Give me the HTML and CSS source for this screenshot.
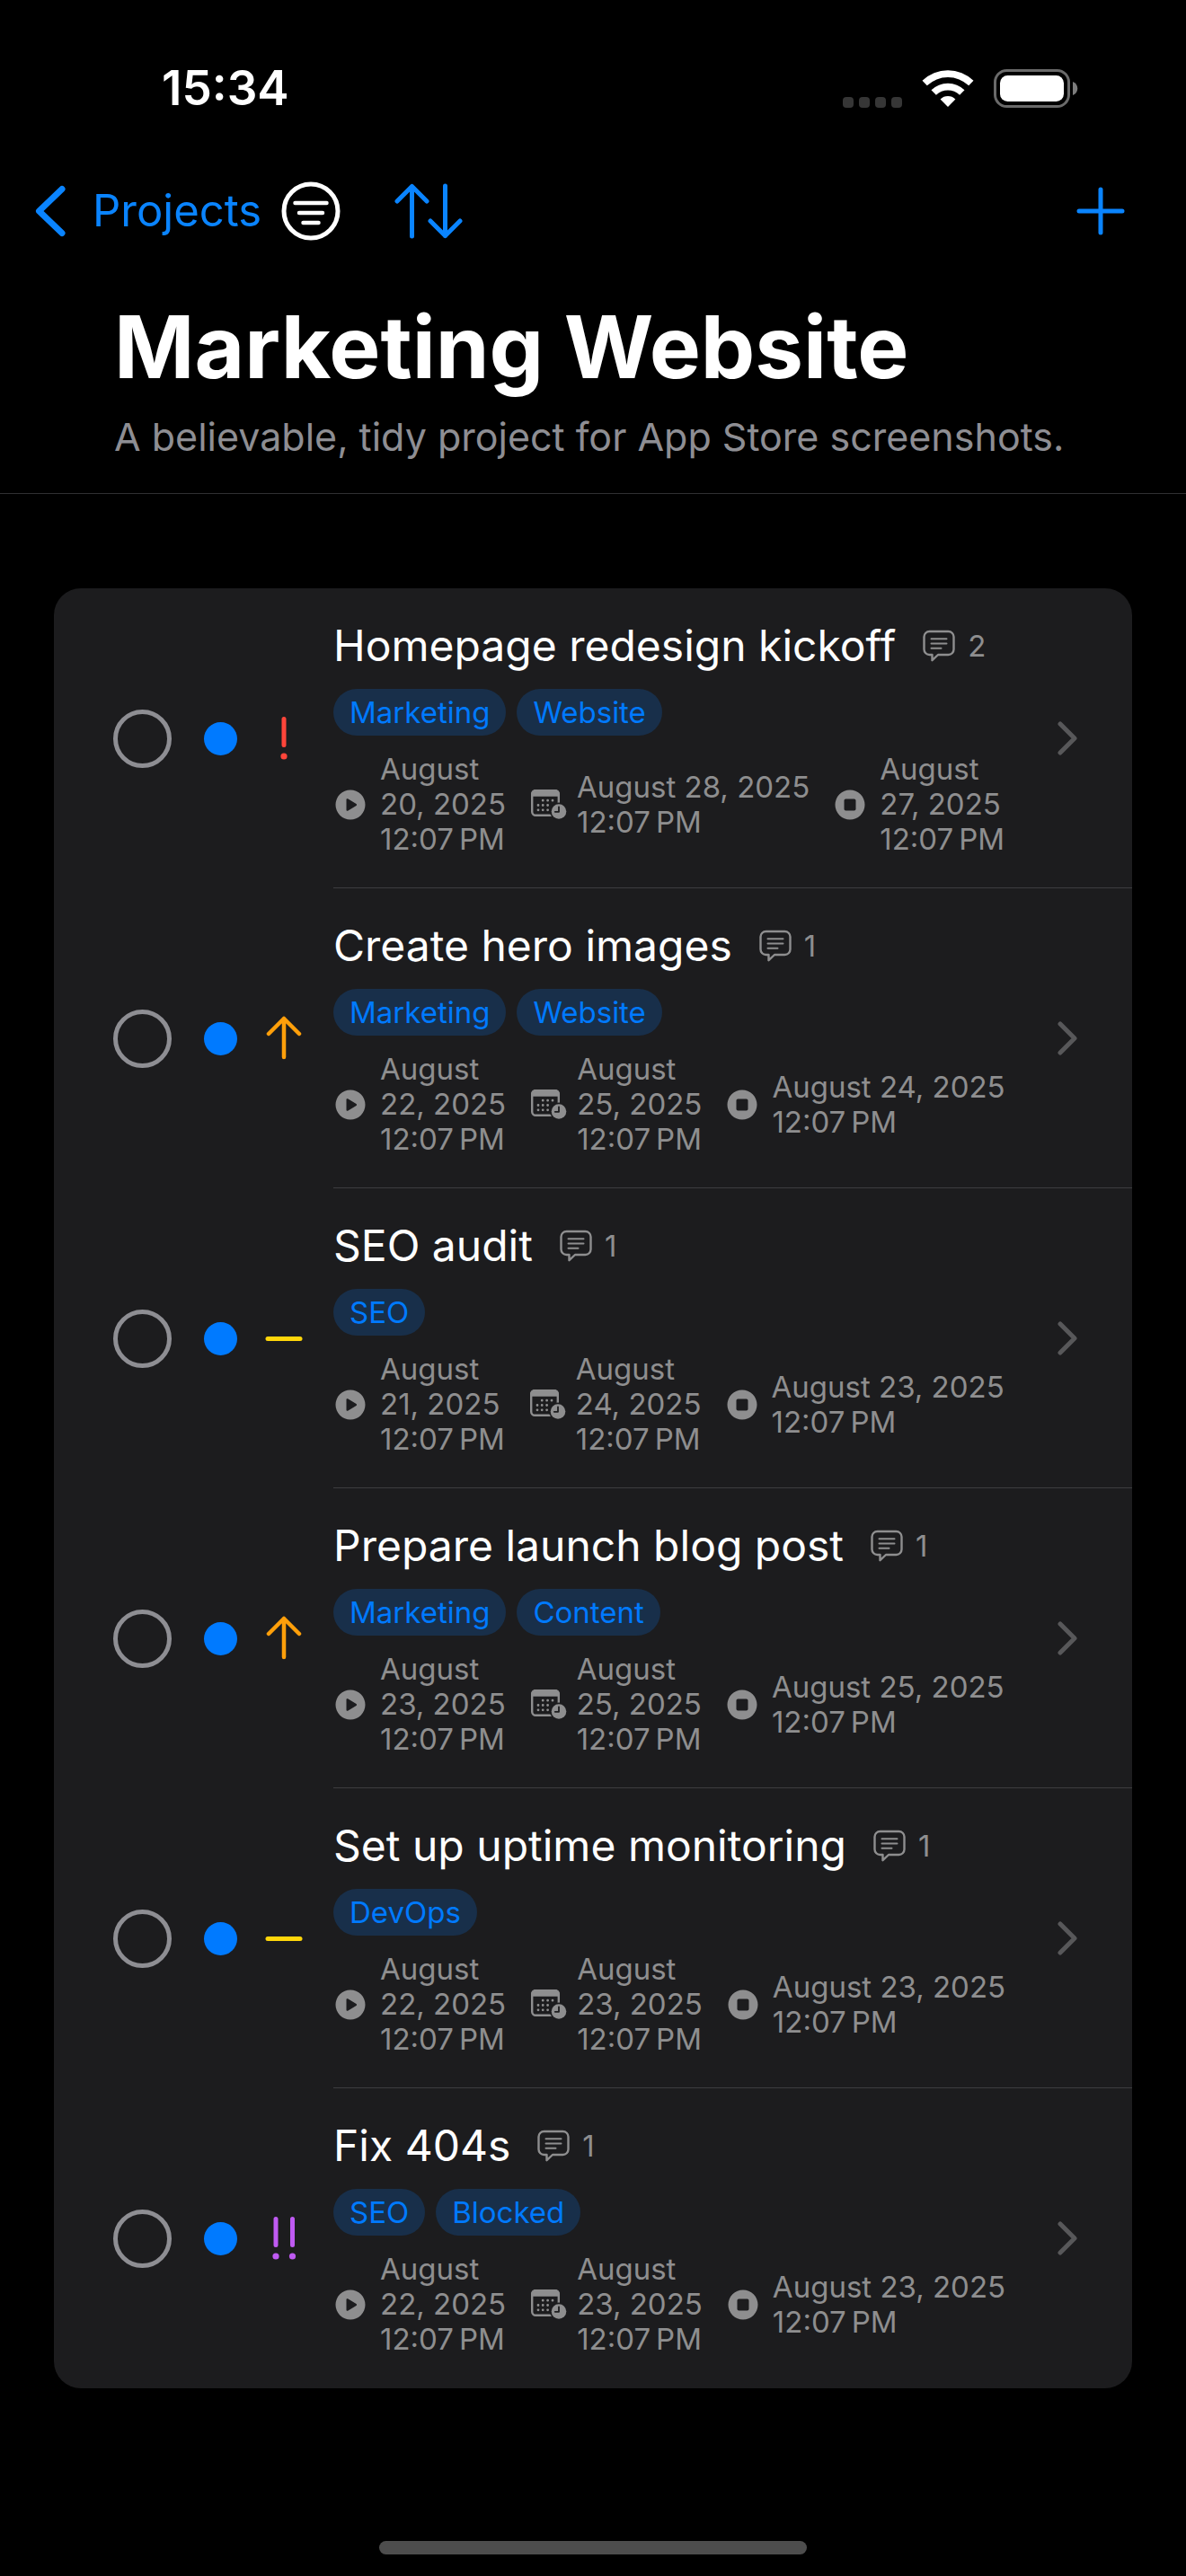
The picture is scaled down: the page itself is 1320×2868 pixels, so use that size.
FILE: index.html
```html
<!DOCTYPE html>
<html lang="en">
<head>
<meta charset="utf-8">
<meta name="viewport" content="width=device-width, initial-scale=1">
<title>Marketing Website</title>
<link rel="stylesheet" href="styles.css">
</head>
<body>
<svg class="sprite" aria-hidden="true">
  <symbol id="comment" viewBox="0 0 36 36">
    <path d="M7.500 2h21a6 6 0 0 1 6 6v14a6 6 0 0 1-6 6H17l-6.500 6.200V28h-3a6 6 0 0 1-6-6V8a6 6 0 0 1 6-6z" fill="none" stroke="currentColor" stroke-width="2.400" stroke-linejoin="round"/>
    <path d="M9.500 10.200h17M9.500 15.500h17M9.500 20.800h11" fill="none" stroke="currentColor" stroke-width="2" stroke-linecap="round"/>
  </symbol>
  <symbol id="play" viewBox="0 0 34 34">
    <path fill="currentColor" fill-rule="evenodd" d="M17 .5a16.500 16.500 0 1 1 0 33a16.500 16.500 0 0 1 0-33zM12.500 11.200v11.600c0 .9.900 1.300 1.600.9l9.400-5.700c.8-.5.800-1.500 0-2l-9.400-5.700c-.7-.4-1.600 0-1.600.9z"/>
  </symbol>
  <symbol id="stop" viewBox="0 0 34 34">
    <path fill="currentColor" fill-rule="evenodd" d="M17 .5a16.500 16.500 0 1 1 0 33a16.500 16.500 0 0 1 0-33zM12.300 10.500a1.800 1.800 0 0 0-1.800 1.800v9.400a1.800 1.800 0 0 0 1.800 1.800h9.400a1.800 1.800 0 0 0 1.800-1.800v-9.400a1.800 1.800 0 0 0-1.800-1.800z"/>
  </symbol>
  <symbol id="calendar" viewBox="0 0 40 34">
    <rect x="1.200" y="1.200" width="29.600" height="27.600" rx="4" fill="none" stroke="currentColor" stroke-width="2.400"/>
    <path d="M0 7.800V5a5 5 0 0 1 5-5h22a5 5 0 0 1 5 5v2.800z" fill="currentColor"/>
    <path d="M13.200 12.200h.01M18.600 12.200h.01M24 12.200h.01M8 17.500h.01M13.200 17.500h.01M18.600 17.500h.01M8 22.800h.01M13.200 22.800h.01M18.600 22.800h.01" fill="none" stroke="currentColor" stroke-width="2.800" stroke-linecap="round"/>
    <circle cx="31" cy="24.500" r="10" fill="#1c1c1e"/>
    <circle cx="31" cy="24.500" r="8.300" fill="currentColor"/>
    <path d="M31 19.500v5.300h-4.200" fill="none" stroke="#1c1c1e" stroke-width="1.800" stroke-linecap="round" stroke-linejoin="round"/>
  </symbol>
  <symbol id="chevron" viewBox="0 0 22 38">
    <path d="M3 3l16 16L3 35" fill="none" stroke="currentColor" stroke-width="5" stroke-linecap="round" stroke-linejoin="round"/>
  </symbol>
  <symbol id="urgent" viewBox="0 0 48 50">
    <path d="M24 3.500v29" stroke="currentColor" stroke-width="5" stroke-linecap="round"/>
    <circle cx="24" cy="45" r="3.600" fill="currentColor"/>
  </symbol>
  <symbol id="critical" viewBox="0 0 48 50">
    <path d="M15 3.500v29M33.500 3.500v29" stroke="currentColor" stroke-width="5" stroke-linecap="round"/>
    <circle cx="15" cy="45" r="3.600" fill="currentColor"/>
    <circle cx="33.500" cy="45" r="3.600" fill="currentColor"/>
  </symbol>
  <symbol id="high" viewBox="0 0 48 50">
    <path d="M24 46V3M7 20L24 3l17 17" fill="none" stroke="currentColor" stroke-width="4.500" stroke-linecap="round" stroke-linejoin="round"/>
  </symbol>
  <symbol id="medium" viewBox="0 0 48 50">
    <path d="M6 25.500h36" stroke="currentColor" stroke-width="5" stroke-linecap="round"/>
  </symbol>
</svg>

<div class="status-bar">
  <time class="clock">15:34</time>
  <div class="indicators">
    <svg width="66" height="12" viewBox="0 0 66 12" class="cellular" aria-hidden="true"><g fill="#363636"><rect x="0" width="12" height="12" rx="4"/><rect x="18" width="12" height="12" rx="4"/><rect x="36" width="12" height="12" rx="4"/><rect x="54" width="12" height="12" rx="4"/></g></svg>
    <svg width="58" height="43" viewBox="0 0 58 43" aria-hidden="true"><g fill="#fff"><path d="M.5 12.800a41 41 0 0 1 57 0l-5.300 5.500a33.500 33.500 0 0 0-46.400 0z"/><path d="M10.500 23.200a26.500 26.500 0 0 1 37 0l-5.400 5.500a18.800 18.800 0 0 0-26.200 0z"/><path d="M20.600 33.400a12.200 12.200 0 0 1 16.800 0L29 42z"/></g></svg>
    <svg width="94" height="43" viewBox="0 0 94 43" aria-hidden="true"><rect x="1.500" y="1.500" width="82" height="40" rx="13" fill="none" stroke="#6a6a6a" stroke-width="3"/><rect x="7" y="7" width="71" height="29" rx="8.500" fill="#fff"/><path d="M88 14c7 2.500 7 12.500 0 15z" fill="#7c7c7c"/></svg>
  </div>
</div>

<nav class="nav-bar">
  <a class="back" href="#projects">
    <svg width="36" height="58" viewBox="0 0 36 58" aria-hidden="true"><path d="M31 4.500L5.500 29 31 53.500" fill="none" stroke="currentColor" stroke-width="7" stroke-linecap="round" stroke-linejoin="round"/></svg>
    <span>Projects</span>
  </a>
  <button class="icon-button filter" type="button" aria-label="Filter">
    <svg width="66" height="66" viewBox="0 0 66 66"><circle cx="33" cy="33" r="30" fill="none" stroke="#fff" stroke-width="5"/><path d="M15.500 24h35M20 35h26M24.500 46h17" stroke="#fff" stroke-width="4.500" stroke-linecap="round"/></svg>
  </button>
  <button class="icon-button sort" type="button" aria-label="Sort">
    <svg width="76" height="62" viewBox="0 0 76 62"><path d="M19.500 59V3.500M3 20L19.500 3.500 36 20M56.500 3v55.500M40 42l16.500 16.500L73 42" fill="none" stroke="currentColor" stroke-width="5" stroke-linecap="round" stroke-linejoin="round"/></svg>
  </button>
  <button class="icon-button add" type="button" aria-label="Add task">
    <svg width="54" height="54" viewBox="0 0 54 54"><path d="M27 3v48M3 27h48" stroke="currentColor" stroke-width="5" stroke-linecap="round"/></svg>
  </button>
</nav>

<header class="page-header">
  <h1>Marketing Website</h1>
  <p>A believable, tidy project for App Store screenshots.</p>
</header>

<main>
  <ul class="tasks">
    <li class="task">
      <input type="checkbox" aria-label="Complete Homepage redesign kickoff">
      <span class="state"></span>
      <svg class="priority red" aria-label="Urgent"><use href="#urgent"/></svg>
      <div class="body">
        <div class="content">
          <div class="heading"><h2>Homepage redesign kickoff</h2><span class="comments"><svg aria-hidden="true"><use href="#comment"/></svg>2</span></div>
          <div class="tags"><span>Marketing</span><span>Website</span></div>
          <div class="dates">
            <div><svg aria-hidden="true"><use href="#play"/></svg><time>August<br>20, 2025<br>12:07&#8239;PM</time></div>
            <div class="due"><svg aria-hidden="true"><use href="#calendar"/></svg><time>August 28, 2025<br>12:07&#8239;PM</time></div>
            <div><svg aria-hidden="true"><use href="#stop"/></svg><time>August<br>27, 2025<br>12:07&#8239;PM</time></div>
          </div>
        </div>
        <svg class="disclosure" aria-hidden="true"><use href="#chevron"/></svg>
      </div>
    </li>
    <li class="task">
      <input type="checkbox" aria-label="Complete Create hero images">
      <span class="state"></span>
      <svg class="priority orange" aria-label="High"><use href="#high"/></svg>
      <div class="body">
        <div class="content">
          <div class="heading"><h2>Create hero images</h2><span class="comments"><svg aria-hidden="true"><use href="#comment"/></svg>1</span></div>
          <div class="tags"><span>Marketing</span><span>Website</span></div>
          <div class="dates">
            <div><svg aria-hidden="true"><use href="#play"/></svg><time>August<br>22, 2025<br>12:07&#8239;PM</time></div>
            <div class="due"><svg aria-hidden="true"><use href="#calendar"/></svg><time>August<br>25, 2025<br>12:07&#8239;PM</time></div>
            <div><svg aria-hidden="true"><use href="#stop"/></svg><time>August 24, 2025<br>12:07&#8239;PM</time></div>
          </div>
        </div>
        <svg class="disclosure" aria-hidden="true"><use href="#chevron"/></svg>
      </div>
    </li>
    <li class="task">
      <input type="checkbox" aria-label="Complete SEO audit">
      <span class="state"></span>
      <svg class="priority yellow" aria-label="Medium"><use href="#medium"/></svg>
      <div class="body">
        <div class="content">
          <div class="heading"><h2>SEO audit</h2><span class="comments"><svg aria-hidden="true"><use href="#comment"/></svg>1</span></div>
          <div class="tags"><span>SEO</span></div>
          <div class="dates">
            <div><svg aria-hidden="true"><use href="#play"/></svg><time>August<br>21, 2025<br>12:07&#8239;PM</time></div>
            <div class="due"><svg aria-hidden="true"><use href="#calendar"/></svg><time>August<br>24, 2025<br>12:07&#8239;PM</time></div>
            <div><svg aria-hidden="true"><use href="#stop"/></svg><time>August 23, 2025<br>12:07&#8239;PM</time></div>
          </div>
        </div>
        <svg class="disclosure" aria-hidden="true"><use href="#chevron"/></svg>
      </div>
    </li>
    <li class="task">
      <input type="checkbox" aria-label="Complete Prepare launch blog post">
      <span class="state"></span>
      <svg class="priority orange" aria-label="High"><use href="#high"/></svg>
      <div class="body">
        <div class="content">
          <div class="heading"><h2>Prepare launch blog post</h2><span class="comments"><svg aria-hidden="true"><use href="#comment"/></svg>1</span></div>
          <div class="tags"><span>Marketing</span><span>Content</span></div>
          <div class="dates">
            <div><svg aria-hidden="true"><use href="#play"/></svg><time>August<br>23, 2025<br>12:07&#8239;PM</time></div>
            <div class="due"><svg aria-hidden="true"><use href="#calendar"/></svg><time>August<br>25, 2025<br>12:07&#8239;PM</time></div>
            <div><svg aria-hidden="true"><use href="#stop"/></svg><time>August 25, 2025<br>12:07&#8239;PM</time></div>
          </div>
        </div>
        <svg class="disclosure" aria-hidden="true"><use href="#chevron"/></svg>
      </div>
    </li>
    <li class="task">
      <input type="checkbox" aria-label="Complete Set up uptime monitoring">
      <span class="state"></span>
      <svg class="priority yellow" aria-label="Medium"><use href="#medium"/></svg>
      <div class="body">
        <div class="content">
          <div class="heading"><h2>Set up uptime monitoring</h2><span class="comments"><svg aria-hidden="true"><use href="#comment"/></svg>1</span></div>
          <div class="tags"><span>DevOps</span></div>
          <div class="dates">
            <div><svg aria-hidden="true"><use href="#play"/></svg><time>August<br>22, 2025<br>12:07&#8239;PM</time></div>
            <div class="due"><svg aria-hidden="true"><use href="#calendar"/></svg><time>August<br>23, 2025<br>12:07&#8239;PM</time></div>
            <div><svg aria-hidden="true"><use href="#stop"/></svg><time>August 23, 2025<br>12:07&#8239;PM</time></div>
          </div>
        </div>
        <svg class="disclosure" aria-hidden="true"><use href="#chevron"/></svg>
      </div>
    </li>
    <li class="task">
      <input type="checkbox" aria-label="Complete Fix 404s">
      <span class="state"></span>
      <svg class="priority purple" aria-label="Critical"><use href="#critical"/></svg>
      <div class="body">
        <div class="content">
          <div class="heading"><h2>Fix 404s</h2><span class="comments"><svg aria-hidden="true"><use href="#comment"/></svg>1</span></div>
          <div class="tags"><span>SEO</span><span>Blocked</span></div>
          <div class="dates">
            <div><svg aria-hidden="true"><use href="#play"/></svg><time>August<br>22, 2025<br>12:07&#8239;PM</time></div>
            <div class="due"><svg aria-hidden="true"><use href="#calendar"/></svg><time>August<br>23, 2025<br>12:07&#8239;PM</time></div>
            <div><svg aria-hidden="true"><use href="#stop"/></svg><time>August 23, 2025<br>12:07&#8239;PM</time></div>
          </div>
        </div>
        <svg class="disclosure" aria-hidden="true"><use href="#chevron"/></svg>
      </div>
    </li>
  </ul>
</main>
<div class="home-indicator"></div>
</body>
</html>
```
FILE: styles.css
```css
* {
  box-sizing: border-box;
}

body {
  display: flex;
  flex-direction: column;
  min-height: 100vh;
  margin: 0;
  background: #000;
  color: #fff;
  font-family: Inter, "Liberation Sans", sans-serif;
}

h1,
h2,
p,
ul {
  margin: 0;
  padding: 0;
  font-weight: 400;
}

svg {
  display: block;
  flex: none;
}

.sprite {
  display: none;
}

.status-bar {
  display: flex;
  align-items: center;
  justify-content: space-between;
  padding: 68px 120px 0 180px;
}

.clock {
  font-size: 53px;
  font-weight: 600;
  line-height: 60px;
}

.indicators {
  display: flex;
  align-items: center;
  gap: 22px;
}

.cellular {
  align-self: flex-end;
}

.nav-bar {
  display: flex;
  align-items: center;
  height: 66px;
  margin-top: 74px;
  padding: 0 68px 0 38px;
  color: #0a84ff;
}

.back {
  display: flex;
  align-items: center;
  gap: 29px;
  color: inherit;
  font-size: 49px;
  line-height: 60px;
  text-decoration: none;
}

.icon-button {
  padding: 0;
  border: 0;
  background: none;
  color: inherit;
}

.filter {
  margin-left: 22px;
}

.sort {
  margin-left: 60px;
}

.add {
  margin-left: auto;
}

.page-header {
  padding: 58px 60px 35px 127px;
  border-bottom: 1px solid #303032;
}

.page-header h1 {
  font-size: 96px;
  font-weight: 700;
  line-height: 120px;
}

.page-header p {
  margin-top: 12px;
  color: #8e8e93;
  font-size: 43px;
  line-height: 56px;
}

main {
  padding: 105px 60px 0;
}

.tasks {
  border-radius: 30px;
  background: #1c1c1e;
  list-style: none;
}

.task {
  display: flex;
  align-items: center;
  padding-left: 66px;
}

.task input {
  flex: none;
  width: 65px;
  height: 65px;
  margin: 0;
  border: 5px solid #8e8e93;
  border-radius: 50%;
  appearance: none;
}

.state {
  flex: none;
  width: 37px;
  height: 37px;
  margin: 0 28px 0 36px;
  border-radius: 50%;
  background: #007aff;
}

.priority {
  width: 48px;
  height: 50px;
}

.red {
  color: #ff453a;
}

.orange {
  color: #ff9f0a;
}

.yellow {
  color: #ffd60a;
}

.purple {
  color: #bf5af2;
}

.body {
  display: flex;
  flex: 1;
  align-items: center;
  justify-content: space-between;
  margin-left: 31px;
  padding: 34px 61px 34px 0;
  border-bottom: 1px solid #3d3d40;
}

.task:last-child .body {
  border-bottom-color: transparent;
}

.content {
  display: flex;
  flex-direction: column;
  gap: 18px;
}

.heading {
  display: flex;
  align-items: center;
  gap: 30px;
}

h2 {
  font-size: 48px;
  line-height: 60px;
}

.comments {
  display: flex;
  align-items: center;
  gap: 14px;
  color: #8e8e8f;
  font-size: 33px;
  line-height: 40px;
}

.comments svg {
  width: 36px;
  height: 36px;
}

.tags {
  display: flex;
  gap: 12px;
}

.tags span {
  padding: 0 18px;
  border-radius: 26px;
  background: #182f4a;
  color: #007aff;
  font-size: 33px;
  line-height: 52px;
}

.dates {
  display: flex;
  align-items: center;
  gap: 26px;
  color: #8e8e8f;
  font-size: 33px;
  line-height: 39px;
}

.dates div {
  display: flex;
  align-items: center;
  gap: 16px;
  padding-left: 2px;
}

.dates .due {
  gap: 11px;
}

.dates svg {
  width: 34px;
  height: 34px;
}

.dates .due svg {
  width: 40px;
}

.disclosure {
  width: 22px;
  height: 38px;
  color: #58585a;
}

.home-indicator {
  width: 36%;
  height: 15px;
  margin: auto auto 24px;
  border-radius: 8px;
  background: #4d4d4d;
}
```
